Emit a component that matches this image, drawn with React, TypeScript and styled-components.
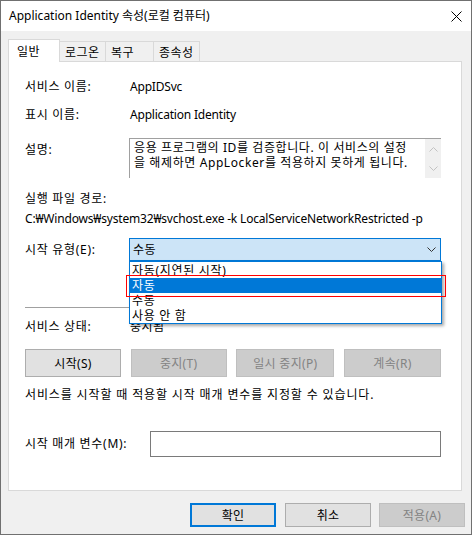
import React from "react";
import styled, { createGlobalStyle } from "styled-components";

const GlobalStyle = createGlobalStyle`
    html, body {
        margin: 0;
        padding: 0;
        background: #fff;
    }
    body {
        font-family: "Noto Sans", "Noto Sans CJK KR", sans-serif;
        font-size: 12px;
        color: #000;
    }
`;

const Window = styled.div`
    width: 472px;
    height: 535px;
    box-sizing: border-box;
    border: 1px solid #707070;
    background: #f0f0f0;
    display: flex;
    flex-direction: column;
`;

const TitleBar = styled.div`
    height: 30px;
    flex: none;
    background: #fff;
    display: flex;
    align-items: center;
    justify-content: space-between;
    padding: 0 9px 0 8px;
    line-height: 16px;
`;

const Body = styled.div`
    padding: 8px 0 0 7px;
    display: flex;
    flex-direction: column;
`;

const TabStrip = styled.div`
    display: flex;
    align-items: flex-end;
    height: 23px;
    margin-bottom: -1px;
`;

const Tab = styled.div<{ $active?: boolean; $w: number }>`
    position: relative;
    z-index: ${(p) => (p.$active ? 2 : 0)};
    box-sizing: border-box;
    width: ${(p) => p.$w}px;
    height: ${(p) => (p.$active ? 23 : 20)}px;
    margin-bottom: ${(p) => (p.$active ? 0 : 1)}px;
    margin-left: -1px;
    border: 1px solid #d9d9d9;
    border-bottom: none;
    background: ${(p) => (p.$active ? "#fff" : "#f0f0f0")};
    padding-left: ${(p) => (p.$active ? 8 : 5)}px;
    letter-spacing: 0.5px;
    display: flex;
    align-items: center;
    &:first-child {
        margin-left: 0;
    }
`;

const Panel = styled.div`
    position: relative;
    z-index: 1;
    box-sizing: border-box;
    width: 454px;
    height: 430px;
    border: 1px solid #d9d9d9;
    background: #fff;
    padding-left: 16px;
    display: flex;
    flex-direction: column;
`;

const Row = styled.div<{ $top: number; $h: number; $align?: string }>`
    display: flex;
    align-items: ${(p) => p.$align ?? "center"};
    margin-top: ${(p) => p.$top}px;
    height: ${(p) => p.$h}px;
    flex: none;
    line-height: 16px;
`;

const Label = styled.div<{ $w?: number; $pt?: number }>`
    width: ${(p) => p.$w ?? 104}px;
    flex: none;
    padding-top: ${(p) => p.$pt ?? 0}px;
    letter-spacing: 0.7px;
    white-space: nowrap;
`;

const Value = styled.div<{ $ls?: number; $pl?: number }>`
    padding-left: ${(p) => p.$pl ?? 1}px;
    letter-spacing: ${(p) => p.$ls ?? -0.2}px;
    white-space: nowrap;
`;

const DescBox = styled.div`
    position: relative;
    box-sizing: border-box;
    width: 312px;
    height: 40px;
    border-top: 1px solid #a0a0a0;
    border-left: 1px solid #a0a0a0;
    display: flex;
`;

const DescText = styled.div`
    flex: 1;
    padding: 1px 0 0 4px;
    line-height: 15px;
    letter-spacing: 0.6px;
    white-space: nowrap;
`;

const ScrollBar = styled.div`
    width: 16px;
    background: #f0f0f0;
    display: flex;
    flex-direction: column;
    align-items: center;
    justify-content: space-between;
    padding: 8px 0 7px;
    box-sizing: border-box;
`;

const Combo = styled.div`
    position: relative;
    box-sizing: border-box;
    width: 312px;
    height: 23px;
    border: 1px solid #0078d7;
    background: #cce4f7;
    display: flex;
    align-items: center;
    justify-content: space-between;
    padding: 0 4px 0 3px;
    letter-spacing: 0.5px;
`;

const DropList = styled.div`
    position: absolute;
    z-index: 10;
    top: 22px;
    left: -1px;
    box-sizing: border-box;
    width: 313px;
    border: 1px solid #0078d7;
    background: #fff;
    padding-top: 1px;
    box-shadow: 2px 2px 3px rgba(0, 0, 0, 0.35);
`;

const DropItem = styled.div<{ $selected?: boolean }>`
    height: 15px;
    line-height: 15px;
    padding-left: 2px;
    letter-spacing: 0.7px;
    white-space: nowrap;
    background: ${(p) => (p.$selected ? "#0078d7" : "transparent")};
    color: ${(p) => (p.$selected ? "#fff" : "#000")};
`;

const Marker = styled.div`
    position: absolute;
    left: -4px;
    top: 13px;
    width: 320px;
    height: 22px;
    box-sizing: border-box;
    border: 1px solid #ff0000;
    pointer-events: none;
`;

const Separator = styled.div<{ $top: number }>`
    margin-top: ${(p) => p.$top}px;
    width: 415px;
    height: 1px;
    background: #a0a0a0;
    flex: none;
`;

const ButtonRow = styled.div<{ $top: number }>`
    margin-top: ${(p) => p.$top}px;
    width: 416px;
    display: flex;
    justify-content: space-between;
    flex: none;
`;

const Button = styled.div<{ $w: number; $h: number; $disabled?: boolean; $default?: boolean }>`
    box-sizing: border-box;
    width: ${(p) => p.$w}px;
    height: ${(p) => p.$h}px;
    display: flex;
    align-items: center;
    justify-content: center;
    white-space: nowrap;
    letter-spacing: 0.3px;
    background: ${(p) => (p.$disabled ? "#cccccc" : "#e1e1e1")};
    color: ${(p) => (p.$disabled ? "#838383" : "#000")};
    border: ${(p) =>
        p.$default ? "2px solid #0078d7" : p.$disabled ? "1px solid #bfbfbf" : "1px solid #adadad"};
`;

const TextInput = styled.div`
    box-sizing: border-box;
    width: 291px;
    height: 26px;
    border: 1px solid #7a7a7a;
    background: #fff;
`;

const Footer = styled.div`
    display: flex;
    justify-content: flex-end;
    gap: 9px;
    margin-top: 12px;
    padding-right: 6px;
    & > :last-child {
        margin-left: -1px;
    }
`;

const Chevron = ({ up, color }: { up?: boolean; color: string }) => (
    <svg width="9" height="5" viewBox="0 0 9 5">
        <polyline
            points={up ? "0.5,4.5 4.5,0.5 8.5,4.5" : "0.5,0.5 4.5,4.5 8.5,0.5"}
            fill="none"
            stroke={color}
            strokeWidth="1"
        />
    </svg>
);

export default function App(): JSX.Element {
    return (
        <>
            <GlobalStyle />
            <Window>
                <TitleBar>
                    <span>Application Identity 속성(로컬 컴퓨터)</span>
                    <svg width="11" height="11" viewBox="0 0 11 11">
                        <path d="M0.5 0.5 L10.5 10.5 M10.5 0.5 L0.5 10.5" stroke="#000" strokeWidth="1" />
                    </svg>
                </TitleBar>
                <Body>
                    <TabStrip>
                        <Tab $active $w={52}>일반</Tab>
                        <Tab $w={47}>로그온</Tab>
                        <Tab $w={49}>복구</Tab>
                        <Tab $w={47}>종속성</Tab>
                    </TabStrip>
                    <Panel>
                        <Row $top={15} $h={20}>
                            <Label>서비스 이름:</Label>
                            <Value>AppIDSvc</Value>
                        </Row>
                        <Row $top={8} $h={20}>
                            <Label>표시 이름:</Label>
                            <Value>Application Identity</Value>
                        </Row>
                        <Row $top={13} $h={40} $align="flex-start">
                            <Label $pt={4}>설명:</Label>
                            <DescBox>
                                <DescText>
                                    응용 프로그램의 ID를 검증합니다. 이 서비스의 설정
                                    <br />
                                    을 해제하면 AppLocker를 적용하지 못하게 됩니다.
                                </DescText>
                                <ScrollBar>
                                    <Chevron up color="#c2c2c2" />
                                    <Chevron color="#c2c2c2" />
                                </ScrollBar>
                            </DescBox>
                        </Row>
                        <Row $top={13} $h={16}>
                            <Label $w={200}>실행 파일 경로:</Label>
                        </Row>
                        <Row $top={4} $h={16}>
                            <Value $pl={0} $ls={-0.18}>
                                C:₩Windows₩system32₩svchost.exe -k LocalServiceNetworkRestricted -p
                            </Value>
                        </Row>
                        <Row $top={11} $h={23}>
                            <Label>시작 유형(E):</Label>
                            <Combo>
                                <span>수동</span>
                                <Chevron color="#333" />
                                <DropList>
                                    <DropItem>자동(지연된 시작)</DropItem>
                                    <DropItem $selected>자동</DropItem>
                                    <DropItem>수동</DropItem>
                                    <DropItem>사용 안 함</DropItem>
                                    <Marker />
                                </DropList>
                            </Combo>
                        </Row>
                        <Separator $top={46} />
                        <Row $top={11} $h={16}>
                            <Label>서비스 상태:</Label>
                            <Value $ls={0.5}>중지됨</Value>
                        </Row>
                        <ButtonRow $top={14}>
                            <Button $w={96} $h={28}>시작(S)</Button>
                            <Button $w={96} $h={28} $disabled>중지(T)</Button>
                            <Button $w={98} $h={28} $disabled>일시 중지(P)</Button>
                            <Button $w={97} $h={28} $disabled>계속(R)</Button>
                        </ButtonRow>
                        <Row $top={10} $h={16}>
                            <Value $pl={0} $ls={0.86}>
                                서비스를 시작할 때 적용할 시작 매개 변수를 지정할 수 있습니다.
                            </Value>
                        </Row>
                        <Row $top={28} $h={26}>
                            <Label $w={125}>시작 매개 변수(M):</Label>
                            <TextInput />
                        </Row>
                    </Panel>
                    <Footer>
                        <Button $w={86} $h={24} $default>확인</Button>
                        <Button $w={86} $h={24}>취소</Button>
                        <Button $w={86} $h={24} $disabled>적용(A)</Button>
                    </Footer>
                </Body>
            </Window>
        </>
    );
}
